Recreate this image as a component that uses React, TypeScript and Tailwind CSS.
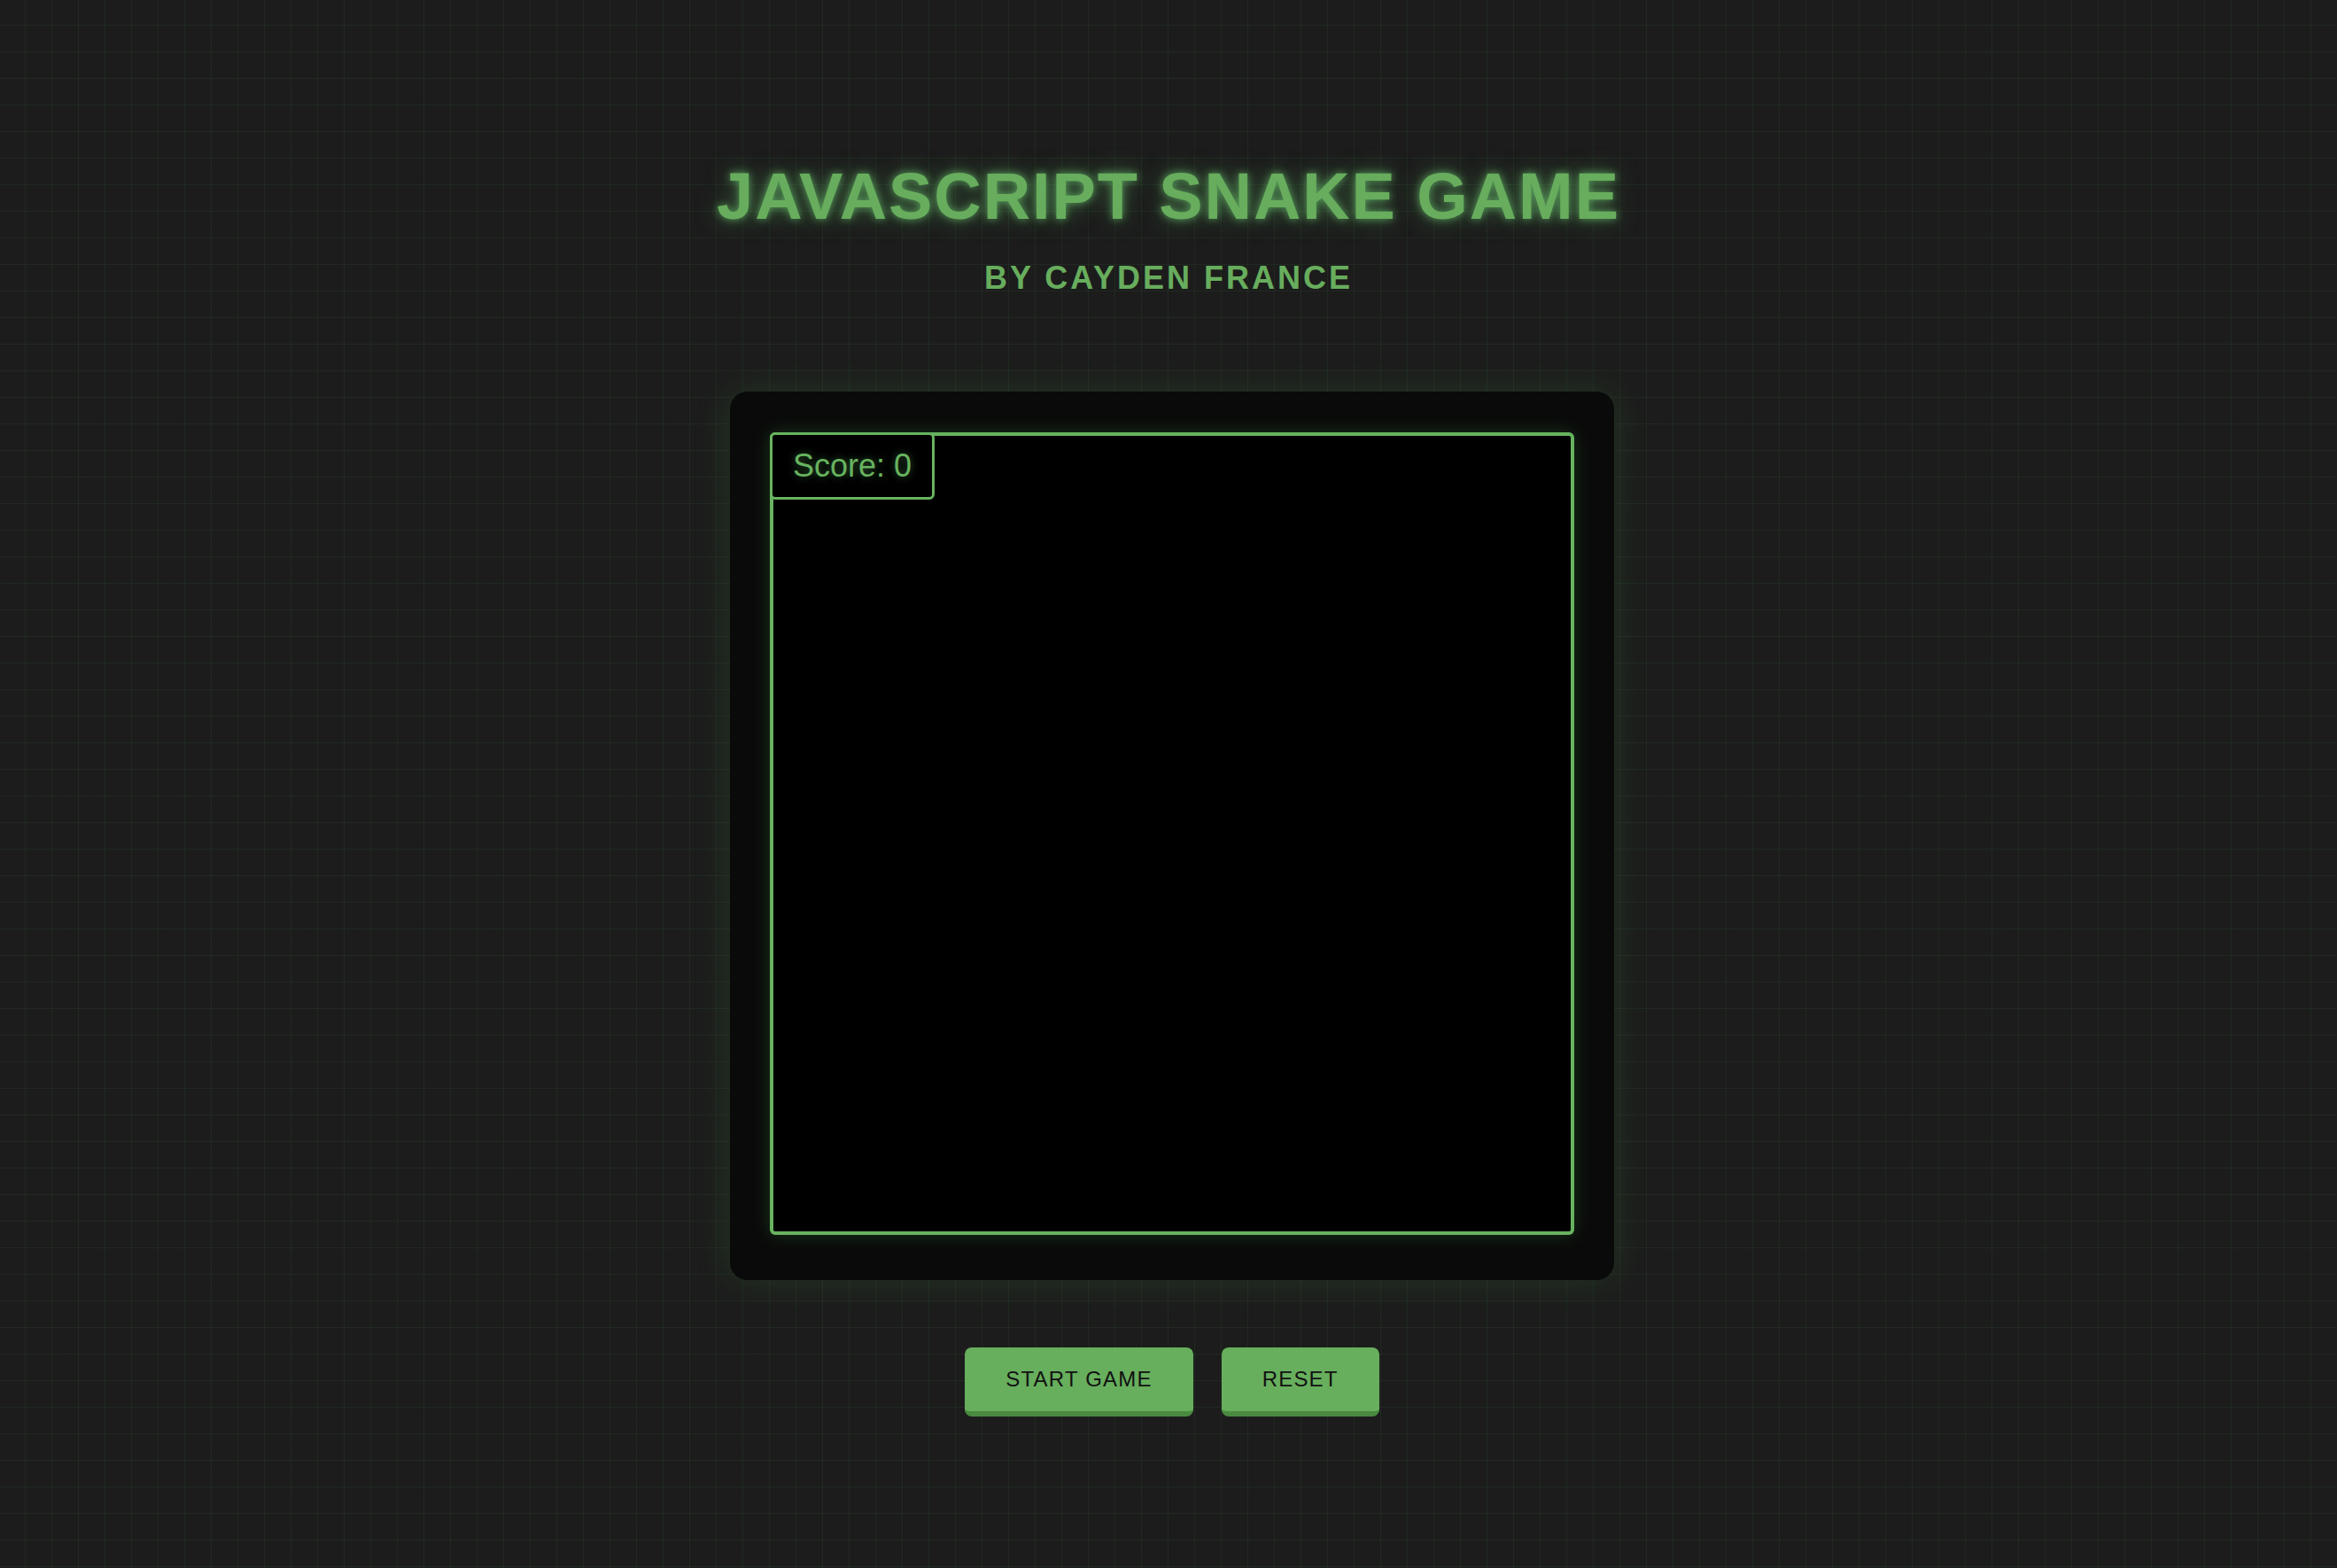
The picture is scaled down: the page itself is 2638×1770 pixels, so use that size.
import { useState } from "react";

export default function App() {
  const [score] = useState(0);

  return (
    <div className="min-h-screen bg-[#1c1c1c] bg-[linear-gradient(rgba(76,175,80,0.09)_1px,transparent_1px),linear-gradient(90deg,rgba(76,175,80,0.09)_1px,transparent_1px)] bg-[size:30px_30px] bg-[position:28px_28px] font-['Liberation_Sans',Arial,sans-serif]">
      <div className="flex flex-col items-center pt-[185px] pb-[120px]">
        {/* Header */}
        <h1 className="text-[74px] leading-none font-bold tracking-[1.9px] text-[#67ad5d] [text-shadow:0_0_10px_rgba(102,187,106,0.8),0_0_26px_rgba(102,187,106,0.5)]">
          JAVASCRIPT SNAKE GAME
        </h1>
        <p className="mt-[37px] text-[36px] leading-none font-bold tracking-[3px] text-[#67ad5d]">
          BY CAYDEN FRANCE
        </p>

        <div className="flex flex-col items-center pl-2">
          {/* Game board */}
          <div className="mt-[110px] w-[998px] rounded-[20px] bg-[#0a0a0a] px-[45px] pt-[46px] pb-[51px] shadow-[0_0_40px_rgba(76,175,80,0.18)]">
            <div className="relative h-[906px] w-[908px] rounded-[6px] border-4 border-[#67b35f] bg-black shadow-[0_0_20px_rgba(76,175,80,0.25)]">
              <div className="absolute -top-[4px] -left-[4px] rounded-[6px] border-[3px] border-[#67b35f] bg-black px-[23px] py-[14px] text-[36px] leading-[42px] text-[#67b35f] [text-shadow:0_0_8px_rgba(102,187,106,0.5)]">
                Score: {score}
              </div>
            </div>
          </div>

          {/* Controls */}
          <div className="mt-[76px] flex gap-[32px]">
            <button className="rounded-[8px] border-b-[6px] border-[#4a8a40] bg-[#67ae5d] px-[46px] py-[22px] text-[24px] leading-[28px] tracking-[1.2px] text-[#111]">
              START GAME
            </button>
            <button className="rounded-[8px] border-b-[6px] border-[#4a8a40] bg-[#67ae5d] px-[46px] py-[22px] text-[24px] leading-[28px] tracking-[1.2px] text-[#111]">
              RESET
            </button>
          </div>
        </div>
      </div>
    </div>
  );
}
